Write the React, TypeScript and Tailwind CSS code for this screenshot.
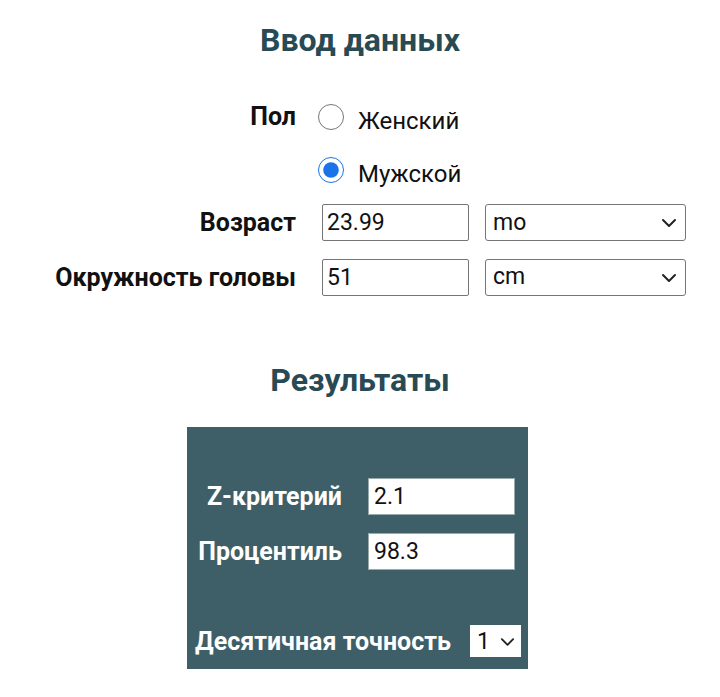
import { useState } from 'react';

function Chevron({ className }: { className?: string }) {
    return (
        <svg viewBox="0 0 16 10" className={className} fill="none" stroke="currentColor" strokeWidth="2" strokeLinecap="round" strokeLinejoin="round">
            <path d="M2 2l6 6 6-6" />
        </svg>
    );
}

function UnitSelect({ value }: { value: string }) {
    return (
        <div className="relative w-[201px] h-[37px]">
            <select
                defaultValue={value}
                className="appearance-none w-full h-full border-[1.5px] border-[#767676] rounded-[3px] bg-white pl-[7px] text-[23px] text-[#111] outline-none"
            >
                <option value={value}>{value}</option>
            </select>
            <Chevron className="absolute right-[9px] top-[14px] w-[16px] h-[10px] text-[#222] pointer-events-none" />
        </div>
    );
}

export default function App() {
    const [sex, setSex] = useState<'f' | 'm'>('m');

    return (
        <div className="w-[720px] min-h-[697px] bg-white font-['Roboto',sans-serif] text-[#111]">
            {/* Input section */}
            <h1 className="pt-[22px] text-center text-[32px] leading-[36px] font-bold text-[#284a54]">Ввод данных</h1>

            <div className="mt-[46px] grid grid-cols-[296px_auto] gap-x-[22px]">
                <div className="text-right text-[25px] font-bold leading-[26px]">Пол</div>
                <div className="flex flex-col gap-[27px]">
                    <label className="flex items-center gap-[14px] h-[26px]">
                        <input
                            type="radio"
                            name="sex"
                            checked={sex === 'f'}
                            onChange={() => setSex('f')}
                            className="m-0 w-[26px] h-[26px] accent-[#1a73e8]"
                        />
                        <span className="text-[24px] mt-[8px]">Женский</span>
                    </label>
                    <label className="flex items-center gap-[14px] h-[26px]">
                        <input
                            type="radio"
                            name="sex"
                            checked={sex === 'm'}
                            onChange={() => setSex('m')}
                            className="m-0 w-[26px] h-[26px] accent-[#1a73e8]"
                        />
                        <span className="text-[24px] mt-[8px]">Мужской</span>
                    </label>
                </div>
            </div>

            <div className="mt-[21px] grid grid-cols-[296px_auto] gap-x-[26px] gap-y-[17px] items-center">
                <div className="text-right text-[25px] font-bold">Возраст</div>
                <div className="flex items-center gap-[16px]">
                    <input
                        defaultValue="23.99"
                        className="w-[147px] h-[37px] border-[1.5px] border-[#767676] rounded-[2px] px-[4px] text-[23px] outline-none"
                    />
                    <UnitSelect value="mo" />
                </div>
                <div className="text-right text-[25px] font-bold">Окружность головы</div>
                <div className="flex items-center gap-[16px]">
                    <input
                        defaultValue="51"
                        className="w-[147px] h-[37px] border-[1.5px] border-[#767676] rounded-[2px] px-[4px] text-[23px] outline-none"
                    />
                    <UnitSelect value="cm" />
                </div>
            </div>

            {/* Results */}
            <h2 className="mt-[66px] text-center text-[32px] leading-[36px] font-bold text-[#284a54]">Результаты</h2>

            <div className="mt-[29px] ml-[187px] w-[341px] h-[242px] bg-[#3e5f67] text-white flex flex-col">
                <div className="mt-[51px] grid grid-cols-[155px_auto] gap-x-[26px] gap-y-[17px] items-center">
                    <div className="text-right text-[25px] font-bold">Z-критерий</div>
                    <input
                        defaultValue="2.1"
                        className="w-[147px] h-[37px] bg-white border border-[#9aa] px-[5px] text-[23px] text-[#111] outline-none"
                    />
                    <div className="text-right text-[25px] font-bold">Процентиль</div>
                    <input
                        defaultValue="98.3"
                        className="w-[147px] h-[37px] bg-white border border-[#9aa] px-[5px] text-[23px] text-[#111] outline-none"
                    />
                </div>

                <div className="mt-auto mb-[9px] flex items-center justify-between pl-[8px] pr-[7px]">
                    <div className="text-[25px] font-bold">Десятичная точность</div>
                    <div className="relative w-[51px] h-[32px] bg-white">
                        <select
                            defaultValue="1"
                            className="appearance-none w-full h-full bg-white pl-[7px] text-[23px] text-[#111] outline-none"
                        >
                            <option value="1">1</option>
                        </select>
                        <Chevron className="absolute right-[6px] top-[12px] w-[15px] h-[10px] text-[#222] pointer-events-none" />
                    </div>
                </div>
            </div>
        </div>
    );
}
